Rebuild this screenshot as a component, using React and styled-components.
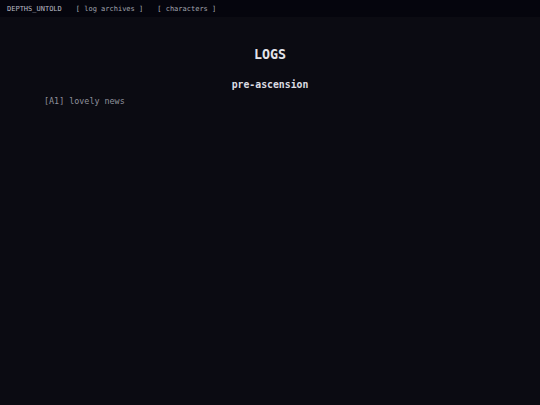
import React from "react";
import styled, { createGlobalStyle } from "styled-components";

const Global = createGlobalStyle`
  html, body { margin: 0; padding: 0; background: #0b0b12; }
  body { font-family: "DejaVu Sans Mono", "Liberation Mono", monospace; }
`;

const Page = styled.div`
  min-height: 405px;
  background: #0b0b12;
  display: flex;
  flex-direction: column;
`;

const TopBar = styled.nav`
  height: 17px;
  background: #05050d;
  display: flex;
  align-items: center;
  padding: 0 7px;
  gap: 14px;
  font-size: 7px;
  color: #a9abb6;
`;

const Brand = styled.span`
  color: #b8bac4;
`;

const NavLink = styled.a`
  color: #a3a5b0;
  text-decoration: none;
  white-space: pre;
  &:visited { color: #a3a5b0; }
`;

const Main = styled.main`
  padding: 30px 44px;
  display: flex;
  flex-direction: column;
`;

const Title = styled.h1`
  margin: 0;
  text-align: center;
  font-size: 13.3px;
  font-weight: bold;
  color: #e3e4ea;
  line-height: 16px;
`;

const Section = styled.h2`
  margin: 16px 0 0;
  text-align: center;
  font-size: 9.8px;
  font-weight: bold;
  color: #dcdde3;
  line-height: 12px;
`;

const Entry = styled.a`
  margin-top: 5px;
  font-size: 8.4px;
  color: #8f919c;
  text-decoration: none;
  line-height: 11px;
  &:visited { color: #8f919c; }
`;

export default function App() {
  return (
    <>
      <Global />
      <Page>
        <TopBar>
          <Brand>DEPTHS_UNTOLD</Brand>
          <NavLink href="#">[ log archives ]</NavLink>
          <NavLink href="#">[ characters ]</NavLink>
        </TopBar>
        <Main>
          <Title>LOGS</Title>
          <Section>pre-ascension</Section>
          <Entry href="#">[A1] lovely news</Entry>
        </Main>
      </Page>
    </>
  );
}
